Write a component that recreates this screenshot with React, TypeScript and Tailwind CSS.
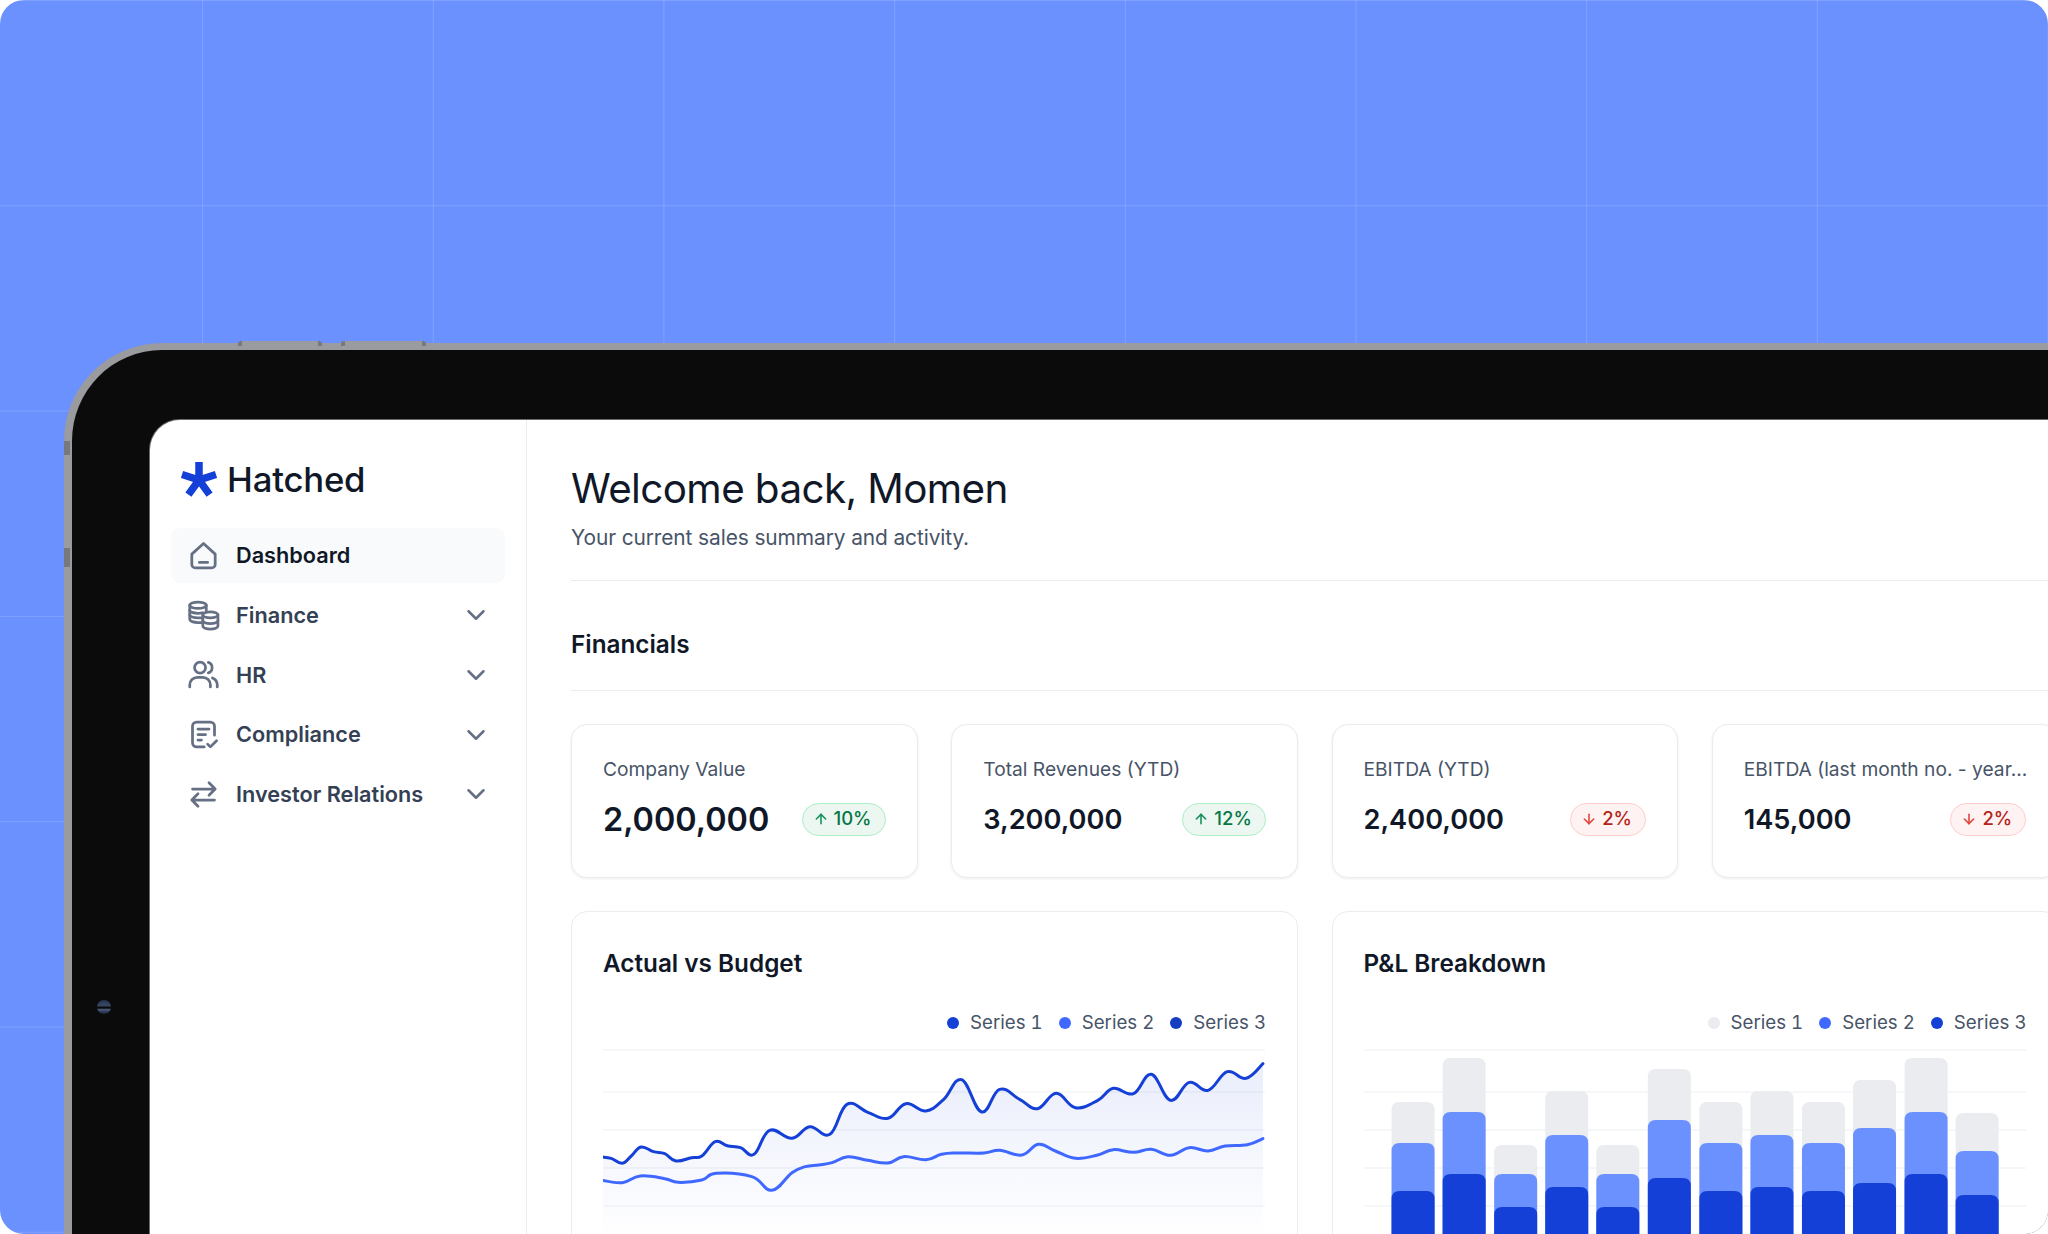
import { ArrowDown, ArrowUp, ChevronDown } from "lucide-react";
import type { ReactNode } from "react";

const iconProps = {
  viewBox: "0 0 24 24",
  fill: "none",
  stroke: "#667085",
  strokeWidth: 2,
  strokeLinecap: "round" as const,
  strokeLinejoin: "round" as const,
  className: "h-[33px] w-[33px] shrink-0",
};

function HomeIcon() {
  return (
    <svg {...iconProps}>
      <path d="M3.5 11 12 3.2 20.5 11v7.5a2.5 2.5 0 0 1-2.5 2.5H6a2.5 2.5 0 0 1-2.5-2.5V11Z" />
      <path d="M9 17h6" />
    </svg>
  );
}

function CoinsIcon() {
  return (
    <svg {...iconProps}>
      <ellipse cx="8" cy="4.6" rx="6" ry="2.3" />
      <path d="M2 4.6v10.2c0 1.3 2.7 2.3 6 2.3h3" />
      <path d="M2 8.1c0 1.3 2.7 2.3 6 2.3 1.3 0 2.4-.1 3.4-.4" />
      <path d="M2 11.5c0 1.3 2.7 2.3 6 2.3h3" />
      <path d="M14 4.6V9" />
      <ellipse cx="17" cy="11.6" rx="5.5" ry="2.2" />
      <path d="M11.5 11.6v8c0 1.3 2.5 2.3 5.5 2.3s5.5-1 5.5-2.3v-8" />
      <path d="M11.5 15.6c0 1.3 2.5 2.3 5.5 2.3s5.5-1 5.5-2.3" />
    </svg>
  );
}

function UsersIcon() {
  return (
    <svg {...iconProps}>
      <circle cx="9.5" cy="7" r="4" />
      <path d="M2 21v-1.5A5.5 5.5 0 0 1 7.5 14h4a5.5 5.5 0 0 1 5.5 5.5V21" />
      <path d="M22 21v-1.5a5.5 5.5 0 0 0-3.5-5" />
      <path d="M15.5 3.2a4 4 0 0 1 0 7.6" />
    </svg>
  );
}

function FileCheckIcon() {
  return (
    <svg {...iconProps}>
      <path d="M20 12.5V6a3 3 0 0 0-3-3H7a3 3 0 0 0-3 3v12a3 3 0 0 0 3 3h5.5" />
      <path d="M8 8h8M8 12h5.5M8 16h2.5" />
      <path d="m15 19 2 2 4.5-4.5" />
    </svg>
  );
}

function SwitchIcon() {
  return (
    <svg {...iconProps}>
      <path d="M4 8h16M16 3.5 20.5 8 16 12.5" />
      <path d="M20 16H4M8 11.5 3.5 16 8 20.5" />
    </svg>
  );
}

function Logo() {
  return (
    <svg viewBox="0 0 36 36" className="h-[36px] w-[36px]" stroke="#1540d8" strokeWidth="7.5">
      <path d="M18 18V0M18 18 35 12.5M18 18 28.6 32.6M18 18 7.4 32.6M18 18 1 12.5" />
    </svg>
  );
}

const nav: { label: string; icon: ReactNode; active?: boolean }[] = [
  { label: "Dashboard", icon: <HomeIcon />, active: true },
  { label: "Finance", icon: <CoinsIcon /> },
  { label: "HR", icon: <UsersIcon /> },
  { label: "Compliance", icon: <FileCheckIcon /> },
  { label: "Investor Relations", icon: <SwitchIcon /> },
];

const stats = [
  { label: "Company Value", value: "2,000,000", change: "10%", up: true, big: true },
  { label: "Total Revenues (YTD)", value: "3,200,000", change: "12%", up: true },
  { label: "EBITDA (YTD)", value: "2,400,000", change: "2%", up: false },
  { label: "EBITDA (last month no. - year...", value: "145,000", change: "2%", up: false },
];

// coordinates read off the reference, mapped into the chart box by toChart
const topLine = [
  [5, 468], [25, 472], [50, 487], [70, 465], [92, 438], [120, 452], [145, 458], [170, 480], [205, 470], [228, 465],
  [258, 422], [285, 434], [315, 440], [345, 460], [380, 388], [430, 412], [470, 377], [515, 400], [553, 310], [600, 334],
  [645, 352], [685, 308], [730, 330], [770, 295], [810, 236], [855, 333], [895, 265], [940, 295], [980, 323], [1022, 277],
  [1065, 320], [1115, 298], [1150, 262], [1195, 278], [1235, 220], [1278, 298], [1320, 244], [1362, 268], [1405, 212],
  [1447, 232], [1485, 188],
];

const lowLine = [
  [5, 538], [50, 545], [90, 525], [145, 533], [175, 544], [228, 537], [260, 517], [340, 527], [385, 568], [430, 515],
  [460, 497], [490, 492], [520, 485], [555, 467], [600, 478], [645, 486], [680, 467], [730, 476], [765, 460], [800, 456],
  [860, 456], [895, 448], [945, 462], [982, 430], [1020, 450], [1065, 472], [1115, 462], [1150, 446], [1195, 454],
  [1235, 445], [1278, 463], [1320, 440], [1362, 450], [1400, 435], [1450, 431], [1485, 413],
];

const toChart = (pts: number[][]) => pts.map(([x, y]) => [x / 2.24 - 3, y / 3 - 45]);

function smooth(pts: number[][]) {
  let d = `M${pts[0][0]} ${pts[0][1]}`;
  for (let i = 0; i < pts.length - 1; i++) {
    const a = pts[Math.max(i - 1, 0)];
    const b = pts[i];
    const c = pts[i + 1];
    const e = pts[Math.min(i + 2, pts.length - 1)];
    d += ` C${b[0] + (c[0] - a[0]) / 5} ${b[1] + (c[1] - a[1]) / 5} ${c[0] - (e[0] - b[0]) / 5} ${c[1] - (e[1] - b[1]) / 5} ${c[0]} ${c[1]}`;
  }
  return d;
}

const gridYs = [4, 46, 84, 122, 160, 198];

function GridLines() {
  return (
    <>
      {gridYs.map((y) => (
        <line key={y} x1="0" x2="662" y1={y} y2={y} stroke="#f2f4f7" strokeWidth="1.3" />
      ))}
    </>
  );
}

function LineChart() {
  const top = toChart(topLine);
  const low = toChart(lowLine);
  const path = smooth(top);
  return (
    <svg viewBox="0 0 662 200" className="block h-[200px] w-[662px]" fill="none">
      <defs>
        <linearGradient id="area" gradientUnits="userSpaceOnUse" x1="0" y1="30" x2="0" y2="192">
          <stop offset="0" stopColor="#1540d8" stopOpacity="0.085" />
          <stop offset="1" stopColor="#1540d8" stopOpacity="0" />
        </linearGradient>
      </defs>
      <GridLines />
      <path d={`${path} L${top[top.length - 1][0]} 200 L${top[0][0]} 200 Z`} fill="url(#area)" />
      <path d={smooth(low)} stroke="#3e68ff" strokeWidth="3" strokeLinecap="round" />
      <path d={path} stroke="#1540d8" strokeWidth="3" strokeLinecap="round" />
    </svg>
  );
}

const barLefts = [152, 262, 373, 483, 593, 704, 815, 925, 1036, 1146, 1257, 1367];
const barTops = [1101, 1057, 1144, 1090, 1144, 1068, 1101, 1090, 1101, 1079, 1057, 1112];
const barMids = [1142, 1111, 1173, 1134, 1173, 1119, 1142, 1134, 1142, 1127, 1111, 1150];
const barLows = [1190, 1173, 1206, 1186, 1206, 1177, 1190, 1186, 1190, 1182, 1173, 1194];

function barPath(x: number, top: number) {
  const y = top - 1045;
  return `M${x} 200 V${y + 8} Q${x} ${y} ${x + 8} ${y} H${x + 35} Q${x + 43} ${y} ${x + 43} ${y + 8} V200 Z`;
}

function BarChart() {
  return (
    <svg viewBox="0 0 662 200" className="block h-[200px] w-[662px]">
      <GridLines />
      {barLefts.map((l, i) => {
        const x = l / 2.154 - 43;
        return (
          <g key={l}>
            <path d={barPath(x, barTops[i])} fill="#eaecf0" />
            <path d={barPath(x, barMids[i])} fill="#6b91ff" />
            <path d={barPath(x, barLows[i])} fill="#1540d8" />
          </g>
        );
      })}
    </svg>
  );
}

function Legend({ colors }: { colors: string[] }) {
  return (
    <div className="mt-[31px] flex h-[26px] items-center justify-end gap-[16px] text-[18.7px] tabular-nums text-[#475467]">
      {colors.map((c, i) => (
        <div key={i} className="flex items-center gap-[11px]">
          <span className={`h-[12px] w-[12px] rounded-full ${c}`} />
          <span>Series {i + 1}</span>
        </div>
      ))}
    </div>
  );
}

function StatCard({ label, value, change, up, big }: (typeof stats)[number]) {
  return (
    <div className="h-[154px] rounded-[16px] border border-[#eaecf0] bg-white px-[31px] pt-[31px] shadow-[0_1px_3px_rgba(16,24,40,0.08)]">
      <div className="h-[26px] whitespace-nowrap text-[19.2px] leading-[26px] text-[#475467]">{label}</div>
      <div className="mt-[17px] flex h-[40px] items-center justify-between">
        <span className={`mt-[2px] font-semibold text-[#101828] ${big ? "text-[32.4px]" : "text-[27.2px]"}`}>{value}</span>
        <span
          className={`flex h-[33px] items-center gap-[5px] rounded-full border-[1.5px] pl-[10px] pr-[13px] text-[18.5px] font-medium ${
            up ? "border-[#abefc6] bg-[#ecf7f1] text-[#067647]" : "border-[#fecdca] bg-[#fef3f2] text-[#b42318]"
          }`}
        >
          {up ? (
            <ArrowUp size={16} strokeWidth={2.4} className="text-[#17935c]" />
          ) : (
            <ArrowDown size={16} strokeWidth={2.4} className="text-[#e0483d]" />
          )}
          {change}
        </span>
      </div>
    </div>
  );
}

export default function App() {
  return (
    <div className="h-[1234px] w-[2048px] overflow-hidden bg-white font-['Inter',sans-serif]">
      <div className="h-[1234px] overflow-hidden rounded-[24px] bg-[#6b91ff] bg-[linear-gradient(to_right,rgba(255,255,255,0.14)_1px,transparent_1px),linear-gradient(to_bottom,rgba(255,255,255,0.14)_1px,transparent_1px)] bg-[size:230.7px_205.3px] bg-[position:202px_0] pl-[64px] pt-[343px]">
        <div className="relative h-[1000px] w-[2100px] rounded-tl-[98px] border-l-[8px] border-t-[7px] border-[#9a9b9f] bg-[#0b0b0b] pl-[78px] pt-[70px]">
          <span className="absolute left-[166px] top-[-9px] h-[5px] w-[84px] rounded-t-[3px] border-x-[4px] border-[#77787c] bg-[#9a9b9f]" />
          <span className="absolute left-[269px] top-[-9px] h-[5px] w-[85px] rounded-t-[3px] border-x-[4px] border-[#77787c] bg-[#9a9b9f]" />
          <span className="absolute left-[-8px] top-[91px] h-[14px] w-[6px] bg-[#77787c]" />
          <span className="absolute left-[-8px] top-[198px] h-[19px] w-[6px] bg-[#77787c]" />
          <span className="absolute left-[25px] top-[650px] h-[14px] w-[14px] rounded-full bg-[linear-gradient(to_bottom,#26324f_0%,#3b4866_42%,#0b0b0b_50%,#0b0b0b_58%,#4a5a78_68%,#1a2238_100%)]" />

          <div className="flex h-[900px] overflow-hidden rounded-tl-[30px] bg-white shadow-[0_0_0_1px_#6b6b6b]">
            <aside className="w-[377px] shrink-0 border-r border-[#eaecf0] px-[21px] pt-[42px]">
              <div className="flex h-[36px] items-center gap-[10px] pl-[10px] text-[34.7px] font-medium tracking-[-0.2px] text-[#101828]">
                <Logo />
                <span className="-mt-[2px]">Hatched</span>
              </div>
              <nav className="mt-[30px] flex flex-col gap-[4.7px]">
                {nav.map((n) => (
                  <div
                    key={n.label}
                    className={`flex h-[55px] items-center gap-[16px] rounded-[9px] pl-[16px] pr-[14px] text-[21.7px] font-semibold ${
                      n.active ? "bg-[#f9fafb] text-[#101828]" : "text-[#344054]"
                    }`}
                  >
                    {n.icon}
                    <span className="flex-1">{n.label}</span>
                    {!n.active && <ChevronDown size={30} strokeWidth={2} className="text-[#667085]" />}
                  </div>
                ))}
              </nav>
            </aside>

            <main className="w-[1600px] shrink-0 pl-[44px]">
              <h1 className="mt-[44px] h-[50px] text-[40.4px] font-normal leading-[50px] tracking-[-0.6px] text-[#101828]">
                Welcome back, Momen
              </h1>
              <p className="mt-[10px] text-[20.9px] leading-[28px] tracking-[-0.1px] text-[#475467]">
                Your current sales summary and activity.
              </p>
              <div className="mt-[28px] border-b border-[#eaecf0]" />
              <h2 className="mt-[46px] h-[34px] text-[24.3px] font-semibold leading-[34px] text-[#101828]">Financials</h2>
              <div className="mt-[29px] border-b border-[#eaecf0]" />

              <div className="mt-[33px] grid w-[1486px] grid-cols-[repeat(4,346.5px)] gap-x-[33.75px]">
                {stats.map((s) => (
                  <StatCard key={s.label} {...s} />
                ))}
              </div>

              <div className="mt-[33px] grid w-[1486px] grid-cols-[repeat(2,727px)] gap-x-[33.5px]">
                <div className="h-[500px] rounded-[16px] border border-[#eaecf0] bg-white px-[31px] pt-[35px]">
                  <h3 className="h-[32px] text-[24.3px] font-semibold leading-[32px] text-[#101828]">Actual vs Budget</h3>
                  <Legend colors={["bg-[#1540d8]", "bg-[#3e68ff]", "bg-[#153dc0]"]} />
                  <div className="mt-[9.5px]">
                    <LineChart />
                  </div>
                </div>
                <div className="h-[500px] rounded-[16px] border border-[#eaecf0] bg-white px-[31px] pt-[35px]">
                  <h3 className="h-[32px] text-[24.3px] font-semibold leading-[32px] text-[#101828]">P&amp;L Breakdown</h3>
                  <Legend colors={["bg-[#eaecf0]", "bg-[#3e68ff]", "bg-[#1540d8]"]} />
                  <div className="mt-[9.5px]">
                    <BarChart />
                  </div>
                </div>
              </div>
            </main>
          </div>
        </div>
      </div>
    </div>
  );
}
